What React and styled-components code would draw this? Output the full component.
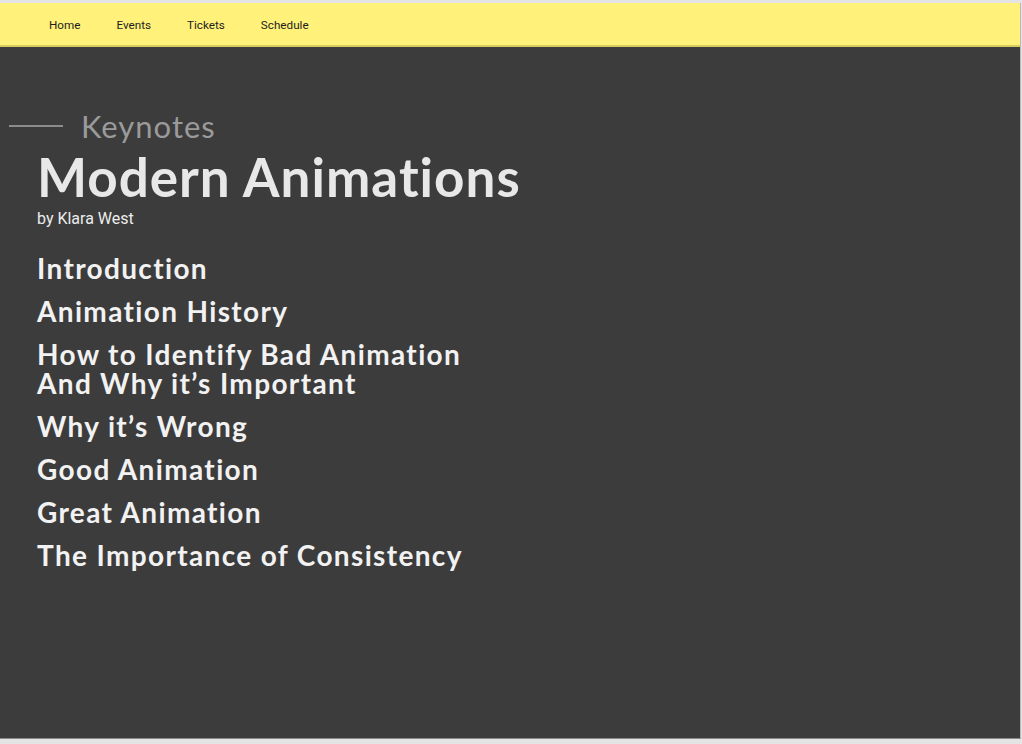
import React from "react";
import styled, { createGlobalStyle } from "styled-components";

const Global = createGlobalStyle`
  html, body { margin: 0; padding: 0; background: #e4e4e4; }
  body { font-family: "Roboto", "Liberation Sans", sans-serif; }
`;

const Frame = styled.div`
  margin-top: 3px;
  width: 1020px;
  height: 735px;
  display: flex;
  flex-direction: column;
  background: #3c3c3c;
  border-right: 1px solid #b8b8b8;
  border-bottom: 1px solid #8a8a8a;
`;

const NavBar = styled.nav`
  box-sizing: border-box;
  height: 44px;
  padding: 2px 0 0 49px;
  background: #fff17a;
  border-bottom: 2px solid #d8cc5e;
  display: flex;
  align-items: center;
  gap: 36px;
`;

const NavLink = styled.a`
  font-family: "Roboto", sans-serif;
  font-size: 11.7px;
  color: #1e1e1e;
  text-decoration: none;
`;

const Main = styled.main`
  padding: 64px 0 0 37px;
  display: flex;
  flex-direction: column;
`;

const Kicker = styled.div`
  display: flex;
  align-items: center;
  margin-left: -28px;
  gap: 18px;
  height: 30px;
`;

const Rule = styled.span`
  display: block;
  width: 54px;
  height: 2px;
  background: #8c8c8c;
`;

const KickerText = styled.span`
  font-family: "Lato", sans-serif;
  font-weight: 400;
  font-size: 31px;
  line-height: 30px;
  letter-spacing: 1px;
  color: #9a9a9a;
`;

const Title = styled.h1`
  margin: 9px 0 0;
  font-family: "Lato", sans-serif;
  font-weight: 700;
  font-size: 53px;
  line-height: 54px;
  color: #e8e8e8;
  letter-spacing: 1px;
`;

const Author = styled.p`
  margin: 5px 0 0;
  font-family: "Roboto", sans-serif;
  font-size: 16px;
  line-height: 20px;
  color: #ededed;
`;

const Outline = styled.ol`
  list-style: none;
  margin: 25px 0 0;
  padding: 0;
  display: flex;
  flex-direction: column;
  gap: 14px;
`;

const Item = styled.li`
  font-family: "Lato", sans-serif;
  font-weight: 700;
  font-size: 28px;
  line-height: 29px;
  letter-spacing: 1.35px;
  color: #f2f2f2;
`;

const topics = [
  ["Introduction"],
  ["Animation History"],
  ["How to Identify Bad Animation", "And Why it’s Important"],
  ["Why it’s Wrong"],
  ["Good Animation"],
  ["Great Animation"],
  ["The Importance of Consistency"],
];

export default function App() {
  return (
    <>
      <Global />
      <Frame>
        <NavBar>
          <NavLink href="#">Home</NavLink>
          <NavLink href="#">Events</NavLink>
          <NavLink href="#">Tickets</NavLink>
          <NavLink href="#">Schedule</NavLink>
        </NavBar>
        <Main>
          <Kicker>
            <Rule />
            <KickerText>Keynotes</KickerText>
          </Kicker>
          <Title>Modern Animations</Title>
          <Author>by Klara West</Author>
          <Outline>
            {topics.map((lines, i) => (
              <Item key={i}>
                {lines.map((l, j) => (
                  <React.Fragment key={j}>
                    {j > 0 && <br />}
                    {l}
                  </React.Fragment>
                ))}
              </Item>
            ))}
          </Outline>
        </Main>
      </Frame>
    </>
  );
}
